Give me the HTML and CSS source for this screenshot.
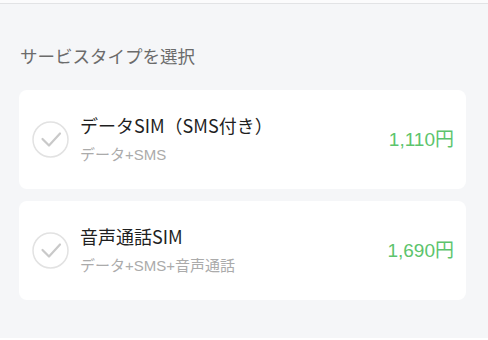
FILE: index.html
```html
<!DOCTYPE html>
<html lang="ja">
<head>
<meta charset="utf-8">
<link rel="stylesheet" href="styles.css">
</head>
<body>
<div class="topbar"></div>
<main class="page">
  <h2 class="heading">サービスタイプを選択</h2>
  <div class="list">
    <div class="card">
      <span class="check">
        <svg width="37" height="37" viewBox="0 0 37 37"><circle cx="18.5" cy="18.5" r="17.5" fill="none" stroke="#e2e2e2" stroke-width="1.5"/><path d="M10.5 18 L17 24.5 L28 12.5" fill="none" stroke="#c9c9c9" stroke-width="2.2" stroke-linecap="round" stroke-linejoin="round"/></svg>
      </span>
      <div class="info">
        <div class="name">データSIM（SMS付き）</div>
        <div class="desc">データ+SMS</div>
      </div>
      <div class="price">1,110円</div>
    </div>
    <div class="card">
      <span class="check">
        <svg width="37" height="37" viewBox="0 0 37 37"><circle cx="18.5" cy="18.5" r="17.5" fill="none" stroke="#e2e2e2" stroke-width="1.5"/><path d="M10.5 18 L17 24.5 L28 12.5" fill="none" stroke="#c9c9c9" stroke-width="2.2" stroke-linecap="round" stroke-linejoin="round"/></svg>
      </span>
      <div class="info">
        <div class="name">音声通話SIM</div>
        <div class="desc">データ+SMS+音声通話</div>
      </div>
      <div class="price">1,690円</div>
    </div>
  </div>
</main>
</body>
</html>
```

FILE: styles.css
```css
html, body {
  margin: 0;
  padding: 0;
  background: #ffffff;
}
body {
  font-family: "Noto Sans CJK JP", "Noto Sans", sans-serif;
}
.topbar {
  height: 3px;
  background: #fbfbfc;
  border-bottom: 1px solid #e2e3e5;
}
.page {
  background: #f5f6f8;
  height: 334px;
  padding: 0 22px 0 19px;
  box-sizing: border-box;
}
.heading {
  margin: 0;
  padding: 37px 0 0 1px;
  height: 86px;
  box-sizing: border-box;
  font-size: 17.5px;
  line-height: 30px;
  font-weight: 400;
  color: #6b6b6b;
}
.list {
  display: flex;
  flex-direction: column;
  gap: 12px;
}
.card {
  background: #ffffff;
  border-radius: 8px;
  height: 99px;
  display: flex;
  align-items: center;
  padding: 0 12px 0 13px;
}
.check {
  width: 37px;
  height: 37px;
  display: block;
  margin-right: 11px;
}
.check svg {
  display: block;
}
.info {
  flex: 1;
  display: flex;
  flex-direction: column;
  gap: 8px;
  margin-top: -2px;
}
.name {
  font-size: 18px;
  line-height: 24px;
  color: #1f1f1f;
}
.desc {
  font-family: "Liberation Sans", "Noto Sans CJK JP", sans-serif;
  font-size: 15px;
  line-height: 20px;
  color: #ababab;
}
.price {
  font-family: "Liberation Sans", "Noto Sans CJK JP", sans-serif;
  font-size: 19px;
  line-height: 24px;
  color: #5cc46c;
}
```
